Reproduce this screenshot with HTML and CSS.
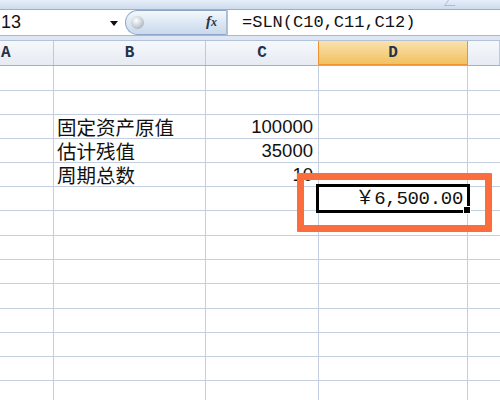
FILE: index.html
```html
<!DOCTYPE html>
<html lang="zh">
<head>
<meta charset="utf-8">
<link rel="stylesheet" href="styles.css">
</head>
<body>
<div class="app">
  <div class="ribbon"><span class="notch"></span></div>
  <div class="fbar">
    <div class="namebox"><span class="name">13</span><span class="arrow"></span></div>
    <div class="pill"><span class="knob"></span><span class="fx">f<span class="x">x</span></span></div>
    <div class="formula">=SLN(C10,C11,C12)</div>
  </div>
  <div class="gap"></div>
  <div class="sheet">
    <div class="hdr">
      <div class="c a">A</div><div class="c b">B</div><div class="c cc">C</div><div class="c d sel">D</div><div class="c e"></div>
    </div>
    <div class="row t"><div class="c a"></div><div class="c b"></div><div class="c cc"></div><div class="c d"></div><div class="c e"></div></div>
    <div class="row"><div class="c a"></div><div class="c b"></div><div class="c cc"></div><div class="c d"></div><div class="c e"></div></div>
    <div class="row"><div class="c a"></div><div class="c b txt">固定资产原值</div><div class="c cc num">100000</div><div class="c d"></div><div class="c e"></div></div>
    <div class="row"><div class="c a"></div><div class="c b txt">估计残值</div><div class="c cc num">35000</div><div class="c d"></div><div class="c e"></div></div>
    <div class="row"><div class="c a"></div><div class="c b txt">周期总数</div><div class="c cc num">10</div><div class="c d"></div><div class="c e"></div></div>
    <div class="row"><div class="c a"></div><div class="c b"></div><div class="c cc"></div><div class="c d money">￥6,500.00</div><div class="c e"></div></div>
    <div class="row t"><div class="c a"></div><div class="c b"></div><div class="c cc"></div><div class="c d"></div><div class="c e"></div></div>
    <div class="row"><div class="c a"></div><div class="c b"></div><div class="c cc"></div><div class="c d"></div><div class="c e"></div></div>
    <div class="row"><div class="c a"></div><div class="c b"></div><div class="c cc"></div><div class="c d"></div><div class="c e"></div></div>
    <div class="row t"><div class="c a"></div><div class="c b"></div><div class="c cc"></div><div class="c d"></div><div class="c e"></div></div>
    <div class="row"><div class="c a"></div><div class="c b"></div><div class="c cc"></div><div class="c d"></div><div class="c e"></div></div>
    <div class="row"><div class="c a"></div><div class="c b"></div><div class="c cc"></div><div class="c d"></div><div class="c e"></div></div>
    <div class="row"><div class="c a"></div><div class="c b"></div><div class="c cc"></div><div class="c d"></div><div class="c e"></div></div>
    <div class="row"><div class="c a"></div><div class="c b"></div><div class="c cc"></div><div class="c d"></div><div class="c e"></div></div>
    <div class="cursor"><span class="handle"></span></div>
    <div class="mark"></div>
  </div>
</div>
</body>
</html>
```
FILE: styles.css
```css
html, body {
  margin: 0;
  padding: 0;
  background: #ffffff;
}
.app {
  width: 500px;
  height: 400px;
  overflow: hidden;
  position: relative;
  font-family: "Liberation Sans", Arial, sans-serif;
}
.ribbon {
  height: 9px;
  background: linear-gradient(#e6eef8, #cddbee);
  border-bottom: 1px solid #97b0d0;
  position: relative;
}
.notch {
  position: absolute;
  left: 446px;
  top: 0;
  width: 10px;
  height: 5px;
  border-left: 1px solid #a9bfd9;
  border-bottom: 1px solid #a9bfd9;
  transform: skewX(-35deg);
}
.fbar {
  height: 25px;
  display: flex;
  background: #ffffff;
  border-bottom: 1px solid #a5b9d3;
}
.namebox {
  width: 125px;
  position: relative;
  display: flex;
  align-items: center;
}
.name {
  font-size: 18px;
  color: #111;
  padding-left: 1px;
  line-height: 25px;
}
.arrow {
  position: absolute;
  left: 110px;
  top: 11px;
  width: 0;
  height: 0;
  border-left: 4px solid transparent;
  border-right: 4px solid transparent;
  border-top: 5px solid #111;
}
.pill {
  width: 102px;
  box-sizing: border-box;
  border: 1px solid #8ea7c6;
  border-right: 1px solid #a8bbd2;
  border-radius: 13px 0 0 13px;
  background: linear-gradient(#f4f8fc, #dae6f3 55%, #c9d9ec);
  position: relative;
}
.knob {
  position: absolute;
  left: 5px;
  top: 5px;
  width: 13px;
  height: 13px;
  border-radius: 50%;
  background: radial-gradient(circle at 40% 35%, #ffffff, #c6ccd3 55%, #8d96a0);
}
.fx {
  position: absolute;
  right: 9px;
  top: 2px;
  font-family: "Liberation Serif", serif;
  font-style: italic;
  font-weight: bold;
  font-size: 15px;
  color: #2b3440;
}
.fx .x {
  font-size: 12px;
}
.formula {
  flex: 1;
  font-family: "Liberation Mono", monospace;
  font-size: 17px;
  line-height: 25px;
  padding-left: 14px;
  color: #111;
  border-left: 1px solid #b4c4d8;
}
.gap {
  height: 4px;
  background: #dde6f2;
}
.sheet {
  position: relative;
}
.hdr {
  display: flex;
  height: 26px;
  box-sizing: border-box;
  border-top: 1px solid #b2c2d8;
  border-bottom: 1px solid #9fb2cb;
  background: linear-gradient(#f6f8fb, #e6ebf2);
}
.hdr .c {
  font-family: "Liberation Mono", monospace;
  font-weight: bold;
  font-size: 16px;
  color: #23334a;
  line-height: 24px;
  text-align: center;
  border-right: 1px solid #bccadc;
}
.hdr .a {
  text-align: left;
  padding-left: 1px;
}
.hdr .sel {
  background: linear-gradient(#fbe2b0, #f5cd7c 60%, #f0c060);
  border-left: 1px solid #f2922f;
  border-right: 1px solid #f2922f;
  margin-left: -1px;
  width: 150px;
  box-shadow: inset 0 -1px 0 #f2922f;
}
.row {
  display: flex;
  height: 24px;
  box-sizing: border-box;
  border-bottom: 1px solid #c3cee0;
}
.row.t {
  height: 25px;
}
.c {
  box-sizing: border-box;
  border-right: 1px solid #c3cee0;
  height: 100%;
  white-space: nowrap;
  overflow: visible;
}
.a { width: 54px; }
.b { width: 152px; }
.cc { width: 113px; }
.d { width: 149px; }
.e { flex: 1; border-right: none; }
.txt {
  font-family: "Noto Sans CJK SC", sans-serif;
  font-size: 19.5px;
  line-height: 23px;
  padding-left: 3px;
  color: #111;
}
.num {
  font-size: 18.5px;
  line-height: 24px;
  text-align: right;
  padding-right: 5px;
  color: #111;
}
.money {
  font-family: "Liberation Mono", "Noto Sans CJK SC", monospace;
  font-size: 19px;
  line-height: 24px;
  text-align: right;
  padding-right: 4px;
  color: #111;
  letter-spacing: -0.3px;
}
.cursor {
  position: absolute;
  left: 316px;
  top: 144px;
  width: 154px;
  height: 29px;
  box-sizing: border-box;
  border: 3px solid #000;
}
.handle {
  position: absolute;
  right: -4px;
  bottom: -4px;
  width: 6px;
  height: 6px;
  background: #000;
  border: 1px solid #fff;
}
.mark {
  position: absolute;
  left: 297px;
  top: 133px;
  width: 195px;
  height: 59px;
  box-sizing: border-box;
  border: 7px solid #fb6d3c;
  border-radius: 1px;
}
```
